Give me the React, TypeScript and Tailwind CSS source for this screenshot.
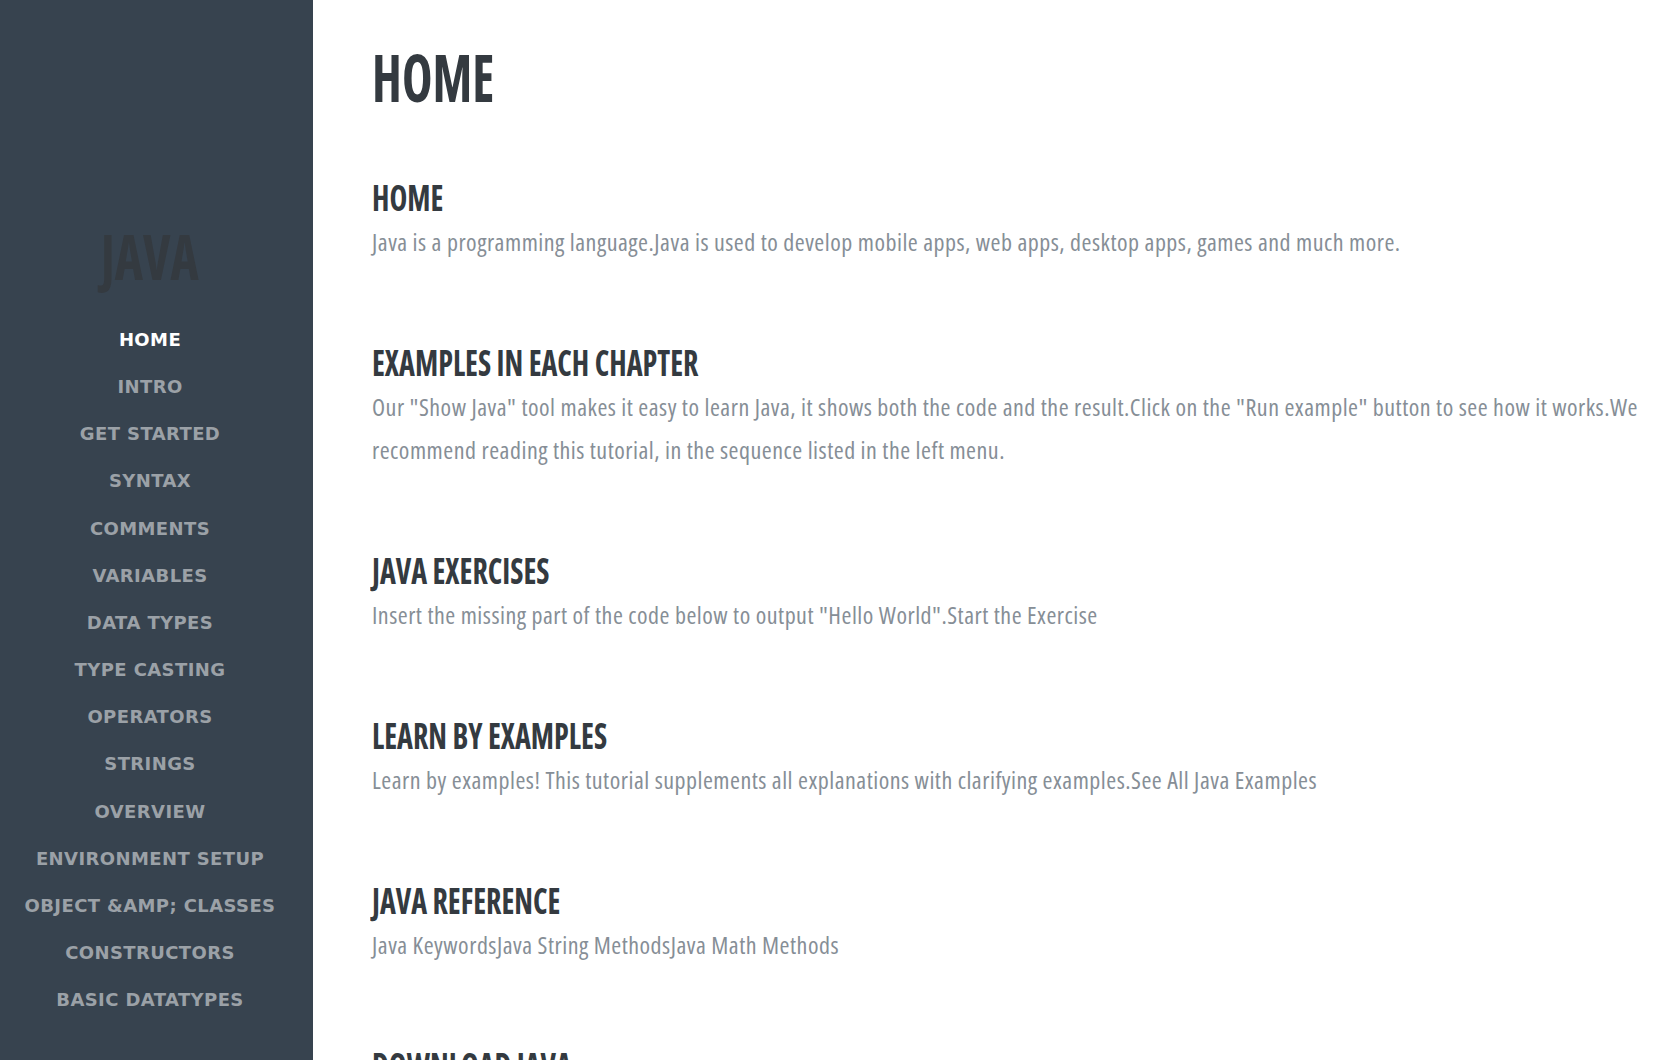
import React from "react";

const nav = [
  "Home",
  "Intro",
  "Get Started",
  "Syntax",
  "Comments",
  "Variables",
  "Data Types",
  "Type Casting",
  "Operators",
  "Strings",
  "Overview",
  "Environment Setup",
  "Object &amp; Classes",
  "Constructors",
  "Basic Datatypes",
];

const sections: { title: string; text: string }[] = [
  {
    title: "Home",
    text: "Java is a programming language.Java is used to develop mobile apps, web apps, desktop apps, games and much more.",
  },
  {
    title: "Examples in Each Chapter",
    text: 'Our "Show Java" tool makes it easy to learn Java, it shows both the code and the result.Click on the "Run example" button to see how it works.We recommend reading this tutorial, in the sequence listed in the left menu.',
  },
  {
    title: "Java Exercises",
    text: 'Insert the missing part of the code below to output "Hello World".Start the Exercise',
  },
  {
    title: "Learn By Examples",
    text: "Learn by examples! This tutorial supplements all explanations with clarifying examples.See All Java Examples",
  },
  {
    title: "Java Reference",
    text: "Java KeywordsJava String MethodsJava Math Methods",
  },
  {
    title: "Download Java",
    text: "Download Java from the official Java web site: https://www.oracle.com",
  },
];

export default function App() {
  return (
    <div className="flex min-h-screen w-full bg-white">
      <aside className="w-[313px] shrink-0 bg-[#37434f] pr-[13px] pt-[224px] flex flex-col items-center">
        <div className="text-[63px] leading-none font-bold uppercase text-[#343a40] font-['Open_Sans',sans-serif] [font-stretch:condensed] scale-x-[0.85] origin-center">
          Java
        </div>
        <ul className="mt-[29px] flex flex-col items-center font-['DejaVu_Sans',sans-serif] font-bold text-[18px] tracking-[0.4px] uppercase">
          {nav.map((n, i) => (
            <li
              key={n}
              className={
                i === 0
                  ? "leading-[47.15px] text-white whitespace-nowrap"
                  : "leading-[47.15px] text-[#9ba1a7] whitespace-nowrap"
              }
            >
              {n}
            </li>
          ))}
        </ul>
      </aside>
      <main className="flex-1 min-w-0 pl-[59px] pr-[14px] pt-[43px] pb-[80px] font-['Open_Sans',sans-serif] [font-stretch:condensed]">
        <h1 className="text-[67px] leading-none font-bold uppercase text-[#343a40] origin-left scale-x-[0.77]">
          Home
        </h1>
        <div className="mt-[70px] flex flex-col gap-[82px]">
          {sections.map((s) => (
            <section key={s.title}>
              <h2 className="text-[35px] leading-none font-bold uppercase text-[#343a40] origin-left scale-x-[0.86]">
                {s.title}
              </h2>
              <p className="mt-[5px] text-[24px] leading-[43px] tracking-[0.5px] text-[#868e96]">
                {s.text}
              </p>
            </section>
          ))}
        </div>
      </main>
    </div>
  );
}
